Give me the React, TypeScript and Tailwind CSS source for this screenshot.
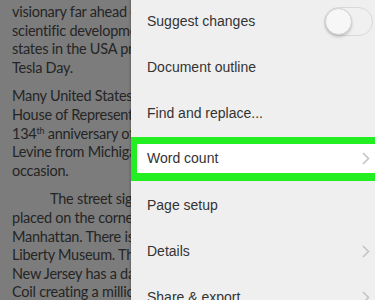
import React from "react";

const docFont = { fontFamily: 'Lato, "Liberation Sans", sans-serif' };
const menuFont = { fontFamily: '"Liberation Sans", Arial, sans-serif' };

function Chevron() {
	return (
		<svg className="w-[8px] h-[13px]" viewBox="0 0 8 13" fill="none">
			<path d="M1 1l5.5 5.5L1 12" stroke="#c4c4c8" strokeWidth="1.6" />
		</svg>
	);
}

function Toggle() {
	return (
		<div className="relative w-[49px] h-[29px] rounded-full border border-[#d9d9d9] bg-[#f0f0f0]">
			<div className="absolute left-0 top-0 w-[27px] h-[27px] rounded-full bg-[#f7f7f7] border border-[#d0d0d0] shadow-[0_2px_3px_rgba(0,0,0,0.18)]" />
		</div>
	);
}

const lines: { text: React.ReactNode; indent?: boolean; gap?: boolean }[] = [
	{ text: "visionary far ahead of his time in" },
	{ text: "scientific development. Several" },
	{ text: "states in the USA proclaimed July 10 as" },
	{ text: "Tesla Day." },
	{ text: "Many United States Congressmen in the", gap: true },
	{ text: "House of Representatives celebrated the" },
	{
		text: (
			<>
				134<sup className="text-[9px]">th</sup> anniversary of his birth
			</>
		),
	},
	{ text: "Levine from Michigan spoke on the" },
	{ text: "occasion." },
	{ text: "The street sign at the", indent: true, gap: true },
	{ text: "placed on the corner of 40th Street in" },
	{ text: "Manhattan. There is a statue at the" },
	{ text: "Liberty Museum. The Liberty Science" },
	{ text: "New Jersey has a daily Tesla" },
	{ text: "Coil creating a million volts." },
];

export default function App() {
	return (
		<div className="flex w-[375px] h-[300px] overflow-hidden bg-[#efefef]">
			<div
				className="w-[131px] shrink-0 overflow-hidden bg-[#7c7c7c] text-[#252525] text-[14.5px] tracking-[-0.25px] leading-[18.6px] pt-[3px] pl-[12px]"
				style={docFont}
			>
				{lines.map((l, i) => (
					<div
						key={i}
						className={
							"whitespace-nowrap " +
							(l.indent ? "pl-[38px] " : "") +
							(l.gap ? "mt-[10px]" : "")
						}
					>
						{l.text}
					</div>
				))}
			</div>
			<div
				className="flex-1 flex flex-col -mt-[2px] bg-[#efefef] shadow-[-1px_0_2px_rgba(0,0,0,0.2)] text-[14px] text-[#333333]"
				style={menuFont}
			>
				<div className="shrink-0 h-[46px] flex items-center justify-between pl-[16px] pr-[2px]">
					<span>Suggest changes</span>
					<Toggle />
				</div>
				<div className="shrink-0 h-[46px] flex items-center pl-[16px]">Document outline</div>
				<div className="shrink-0 h-[46px] flex items-center pl-[16px]">Find and replace...</div>
				<div className="shrink-0 my-[1px] h-[44px] flex items-center justify-between bg-white border-t-[7px] border-b-[8px] border-l-[6px] border-[#22ee22] pl-[10px] pr-[5px]">
					<span>Word count</span>
					<Chevron />
				</div>
				<div className="shrink-0 h-[46px] flex items-center pl-[16px]">Page setup</div>
				<div className="shrink-0 h-[46px] flex items-center justify-between pl-[16px] pr-[5px]">
					<span>Details</span>
					<Chevron />
				</div>
				<div className="shrink-0 h-[46px] flex items-center justify-between pl-[16px] pr-[5px]">
					<span>Share &amp; export</span>
					<Chevron />
				</div>
			</div>
		</div>
	);
}
